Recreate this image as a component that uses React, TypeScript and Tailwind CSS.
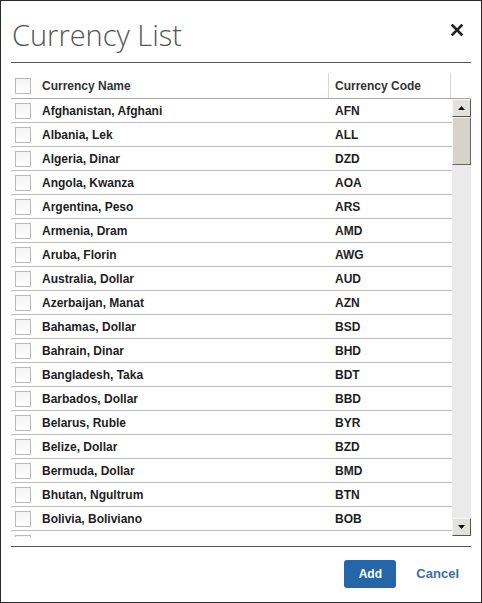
import React from "react";

const rows: [string, string][] = [
  ["Afghanistan, Afghani", "AFN"],
  ["Albania, Lek", "ALL"],
  ["Algeria, Dinar", "DZD"],
  ["Angola, Kwanza", "AOA"],
  ["Argentina, Peso", "ARS"],
  ["Armenia, Dram", "AMD"],
  ["Aruba, Florin", "AWG"],
  ["Australia, Dollar", "AUD"],
  ["Azerbaijan, Manat", "AZN"],
  ["Bahamas, Dollar", "BSD"],
  ["Bahrain, Dinar", "BHD"],
  ["Bangladesh, Taka", "BDT"],
  ["Barbados, Dollar", "BBD"],
  ["Belarus, Ruble", "BYR"],
  ["Belize, Dollar", "BZD"],
  ["Bermuda, Dollar", "BMD"],
  ["Bhutan, Ngultrum", "BTN"],
  ["Bolivia, Boliviano", "BOB"],
];

function Box() {
  return (
    <div className="w-[16px] h-[16px] border border-[#b9b9b9] bg-gradient-to-b from-[#f4f4f4] to-white shrink-0" />
  );
}

export default function App() {
  return (
    <div
      className="w-[482px] h-[603px] border border-[#2a2a2a] bg-white flex flex-col"
      style={{ fontFamily: '"Liberation Sans", Arial, sans-serif' }}
    >
      <div className="mx-[10px] flex items-center justify-between h-[62px] border-b border-[#555] shrink-0">
        <div
          className="text-[29px] font-light text-[#555] leading-none pl-[1px] pt-[6px]"
          style={{ fontFamily: '"Open Sans", sans-serif' }}
        >
          Currency List
        </div>
        <svg width="12" height="12" viewBox="0 0 12 12" className="mr-[8px] mt-[-3px]">
          <path d="M1.5 1.5 L10.5 10.5 M10.5 1.5 L1.5 10.5" stroke="#222" strokeWidth="2.6" strokeLinecap="square" />
        </svg>
      </div>

      <div className="mx-[10px] mt-[10px] h-[26px] flex items-stretch border-b border-[#a9a9a9] text-[12px] font-bold text-[#333] shrink-0">
        <div className="w-[317px] flex items-center">
          <div className="ml-[4px]">
            <Box />
          </div>
          <span className="ml-[11px]">Currency Name</span>
        </div>
        <div className="w-[122px] border-l border-[#d6d6d6] flex items-center pl-[6px]">
          Currency Code
        </div>
        <div className="flex-1 border-l border-[#d6d6d6]" />
      </div>

      <div className="mx-[10px] h-[448px] border-b border-[#555] shrink-0">
        <div className="flex h-[438px]">
          <div className="w-[442px] overflow-hidden">
            {rows.map(([name, code]) => (
              <div
                key={code}
                className="h-[24px] flex items-center border-b border-[#bdbdbd] text-[12px] font-bold text-[#1e1e1e]"
              >
                <div className="w-[317px] flex items-center">
                  <div className="ml-[4px]">
                    <Box />
                  </div>
                  <span className="ml-[11px]">{name}</span>
                </div>
                <div className="pl-[7px]">{code}</div>
              </div>
            ))}
            <div className="h-[24px] flex items-center">
              <div className="ml-[4px]">
                <Box />
              </div>
            </div>
          </div>
          <div className="w-[19px] h-[437px] bg-[#eaeaea] flex flex-col justify-between">
            <div>
              <div className="h-[18px] bg-[#e3e1dc] border border-t-[#f5f5f5] border-l-[#f5f5f5] border-r-[#555] border-b-[#555] flex items-center justify-center">
                <svg width="7" height="4" viewBox="0 0 7 4">
                  <path d="M0 4 L3.5 0 L7 4 Z" fill="#111" />
                </svg>
              </div>
              <div className="h-[48px] bg-[#d7d3cb] border border-t-[#f5f5f5] border-l-[#f5f5f5] border-r-[#666] border-b-[#666]" />
            </div>
            <div className="h-[18px] bg-[#e3e1dc] border border-t-[#f5f5f5] border-l-[#f5f5f5] border-r-[#555] border-b-[#555] flex items-center justify-center">
              <svg width="7" height="4" viewBox="0 0 7 4">
                <path d="M0 0 L3.5 4 L7 0 Z" fill="#111" />
              </svg>
            </div>
          </div>
        </div>
      </div>

      <div className="flex-1 flex items-center justify-end pr-[22px] pb-[2px]">
        <button className="w-[52px] h-[28px] rounded-[3px] bg-[#2566a8] text-white text-[12px] font-bold">
          Add
        </button>
        <button className="ml-[20px] text-[13px] font-bold text-[#3a6ea8]">Cancel</button>
      </div>
    </div>
  );
}
